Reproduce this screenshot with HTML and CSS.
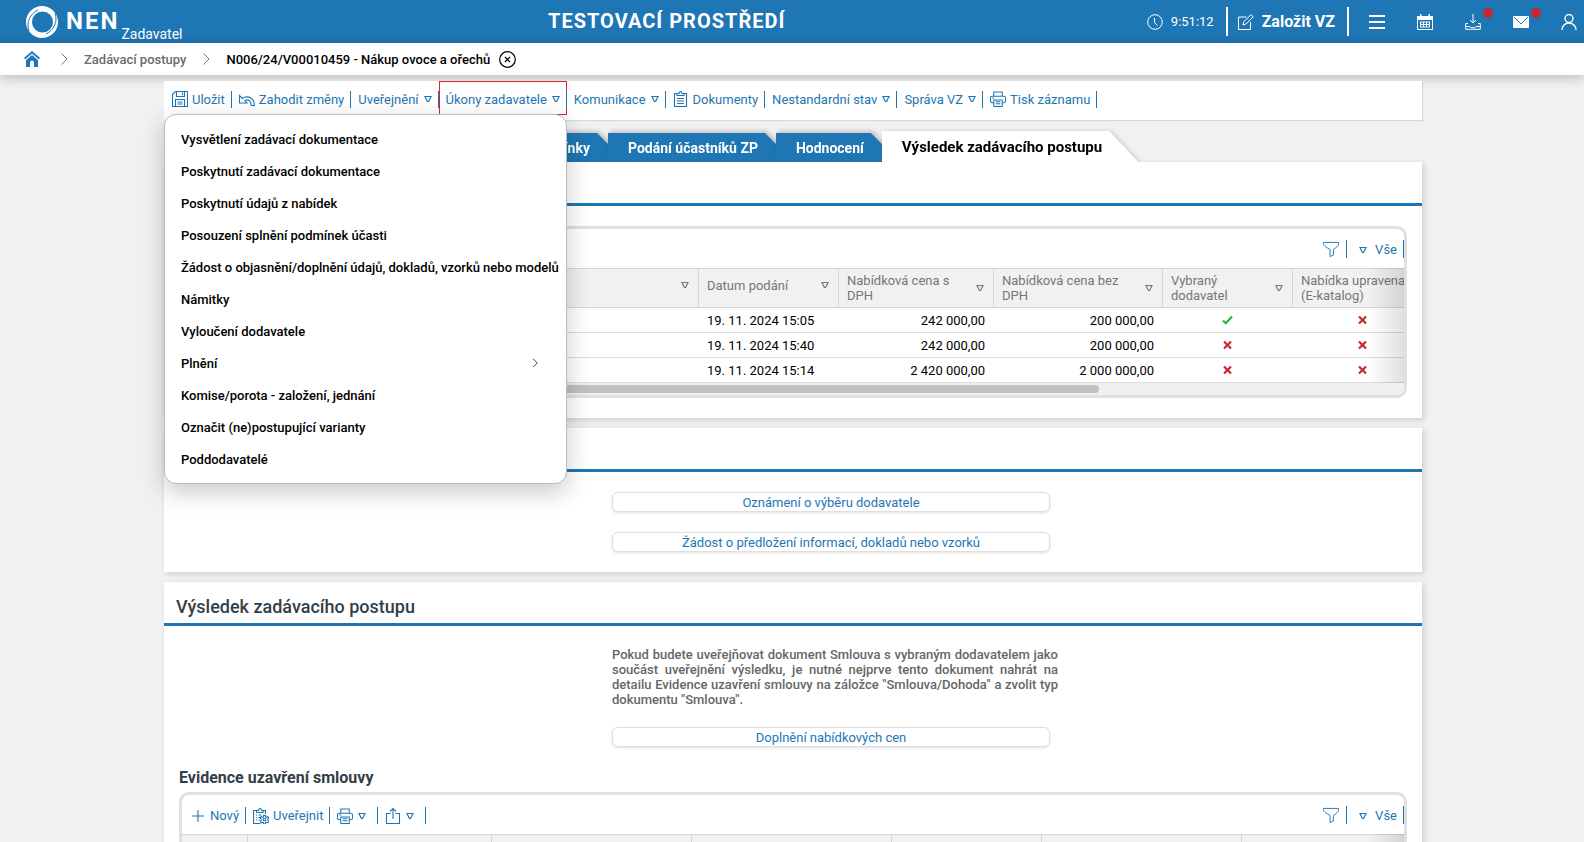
FILE: index.html
```html
<!DOCTYPE html>
<html lang="cs">

<head>
  <meta charset="UTF-8">
  <meta name="viewport" content="width=device-width, initial-scale=1.0">
  <title>NEN - Výsledek zadávacího postupu</title>
  <link rel="stylesheet" href="styles.css">
</head>

<body>
  <!-- shared icons -->
  <svg class="sprite" aria-hidden="true">
    <symbol id="i-tri" viewBox="0 0 8 8"><path d="M1 1.5h6L4.6 6.5H3.4z" /></symbol>
    <symbol id="i-chevron" viewBox="0 0 8 12"><path d="M1.5.5L7 6l-5.500 5.500" /></symbol>
    <symbol id="i-print" viewBox="0 0 17 17">
      <path d="M4 5.500V1h9v4.500M4 12.500H2.500a2 2 0 0 1-2-2v-3a2 2 0 0 1 2-2h12a2 2 0 0 1 2 2v3a2 2 0 0 1-2 2H13M4 9.500h9v7H4zM2.500 7.500h2M6 11.500h5M6 13.500h5" />
    </symbol>
    <symbol id="i-funnel" viewBox="0 0 17 17"><path d="M.5 1.500h16v1.500c0 2-3 4.500-5.500 6v6l-3.500 1.500V9C5 7.500.5 5 .5 3z" /></symbol>
    <symbol id="i-yes" viewBox="0 0 11 10"><path d="M1 5.500l2.800 2.700L10 1.500" /></symbol>
    <symbol id="i-no" viewBox="0 0 11 10"><path d="M2 1.500l7 7M9 1.500l-7 7" /></symbol>
  </svg>

  <header class="topbar">
    <a class="brand" href="#">
      <svg class="logo" viewBox="0 0 32 32">
        <path fill-rule="evenodd" d="M16 0a16 16 0 1 1 0 32a16 16 0 0 1 0-32zM16.500 5.500a10.500 10.500 0 1 0 0 21a10.500 10.500 0 0 0 0-21z" />
        <path class="logo-cut" d="M3 25C0 16 4 8 12 4M29 7c3 9-1 17-9 21" />
      </svg>
      <strong class="brand-name">NEN</strong>
      <span class="brand-role">Zadavatel</span>
    </a>
    <div class="env">TESTOVACÍ PROSTŘEDÍ</div>
    <div class="top-actions">
      <span class="clock">
        <svg class="icon" viewBox="0 0 16 16"><circle cx="8" cy="8" r="7.300" /><path d="M7.500 4v4.500l3 3" /></svg>
        9:51:12
      </span>
      <button class="create">
        <svg class="icon" viewBox="0 0 16 16"><path d="M8.500 3H.5v12.500h12V8M5 11l.7-3.200L13 .7l2.200 2.100L8 10z" /></svg>
        Založit VZ
      </button>
      <button class="top-btn" aria-label="Menu">
        <svg class="icon bold" viewBox="0 0 16 16"><path d="M0 2h16M0 8h16M0 14h16" /></svg>
      </button>
      <button class="top-btn" aria-label="Kalendář">
        <svg class="icon" viewBox="0 0 16 16">
          <path class="solid" d="M0 2h16v4H0zM3 0h1.500v2H3zM11.500 0H13v2h-1.500z" />
          <path d="M.5 5v10.500h15V5M3 8h10M3 10.500h10M3 13h10M3.500 8v5M6.500 8v5M9.500 8v5M12.500 8v5" />
        </svg>
      </button>
      <button class="top-btn" aria-label="Stažené soubory">
        <svg class="icon" viewBox="0 0 16 16"><path d="M8 0v9M5 6l3 3 3-3M3 9.500H.7v5.800h14.600V9.500H13M1 12.500h4l1 1.200h4l1-1.200h4" /></svg>
        <i class="dot"></i>
      </button>
      <button class="top-btn" aria-label="Zprávy">
        <svg class="icon" viewBox="0 0 16 16"><rect class="solid" y="2" width="16" height="12" rx="1" /><path class="flap" d="M1 3l7 7 7-7" /></svg>
        <i class="dot"></i>
      </button>
      <button class="top-btn" aria-label="Uživatel">
        <svg class="icon thick" viewBox="0 0 16 16"><circle cx="8" cy="4.500" r="4" /><path d="M1 16c0-4 3-7 7-7s7 3 7 7" /></svg>
      </button>
    </div>
  </header>

  <nav class="breadcrumb">
    <a class="home-link" href="#" aria-label="Domů">
      <svg class="home" viewBox="0 0 16 16"><path d="M0 7L8 0l8 7-1.300 1.300L8 2.500 1.300 8.300zM2 9.200L8 4l6 5.200V16h-4v-4.500a2 2 0 0 0-4 0V16H2z" /></svg>
    </a>
    <svg class="crumb-sep"><use href="#i-chevron" /></svg>
    <a class="crumb" href="#">Zadávací postupy</a>
    <svg class="crumb-sep"><use href="#i-chevron" /></svg>
    <span class="crumb current">N006/24/V00010459 - Nákup ovoce a ořechů</span>
    <button class="close" aria-label="Zavřít">
      <svg viewBox="0 0 17 17"><circle cx="8.500" cy="8.500" r="7.800" /><path d="M6 6l5 5M11 6l-5 5" /></svg>
    </button>
  </nav>

  <main>
    <div class="toolbar">
      <button class="tool">
        <svg class="icon" viewBox="0 0 16 16"><path d="M.5 3.500l3-3h12v15H.5zM4.500.5v5h8v-5M10.500 1.500v2.500M3.500 15.500v-7h9v7M5.500 11h5M5.500 13h5" /></svg>
        Uložit
      </button>
      <button class="tool">
        <svg class="icon" viewBox="0 0 16 16"><path d="M.5 4.500v7.500H8L6 9.500c3-1.500 6 0 6.300 5h3C15.800 8 9 3.500 3.500 7.500z" /></svg>
        Zahodit změny
      </button>
      <button class="tool">Uveřejnění<svg class="tri"><use href="#i-tri" /></svg></button>
      <button class="tool active" aria-expanded="true">Úkony zadavatele<svg class="tri"><use href="#i-tri" /></svg></button>
      <button class="tool">Komunikace<svg class="tri"><use href="#i-tri" /></svg></button>
      <button class="tool">
        <svg class="icon" viewBox="0 0 16 16"><path d="M4 2.500H1.500v13h12v-13H11M4 4.500V2.500h2c0-2.500 3-2.500 3 0h2v2zM4 7.500h7M4 10h7M4 12.500h7" /></svg>
        Dokumenty
      </button>
      <button class="tool">Nestandardní stav<svg class="tri"><use href="#i-tri" /></svg></button>
      <button class="tool">Správa VZ<svg class="tri"><use href="#i-tri" /></svg></button>
      <button class="tool"><svg class="icon"><use href="#i-print" /></svg>Tisk záznamu</button>

      <ul class="menu">
        <li><a href="#">Vysvětlení zadávací dokumentace</a></li>
        <li><a href="#">Poskytnutí zadávací dokumentace</a></li>
        <li><a href="#">Poskytnutí údajů z nabídek</a></li>
        <li><a href="#">Posouzení splnění podmínek účasti</a></li>
        <li><a href="#">Žádost o objasnění/doplnění údajů, dokladů, vzorků nebo modelů</a></li>
        <li><a href="#">Námitky</a></li>
        <li><a href="#">Vyloučení dodavatele</a></li>
        <li><a href="#">Plnění <svg class="more"><use href="#i-chevron" /></svg></a></li>
        <li><a href="#">Komise/porota - založení, jednání</a></li>
        <li><a href="#">Označit (ne)postupující varianty</a></li>
        <li><a href="#">Poddodavatelé</a></li>
      </ul>
    </div>

    <ul class="tabs">
      <li class="tab first"><a href="#">Podmínky</a></li>
      <li class="tab"><a href="#">Podání účastníků ZP</a></li>
      <li class="tab"><a href="#">Hodnocení</a></li>
      <li class="tab selected"><a href="#">Výsledek zadávacího postupu</a></li>
    </ul>

    <section class="panel">
      <div class="panel-head"></div>
      <div class="grid">
        <div class="grid-bar">
          <div class="grid-filter">
            <button class="filter" aria-label="Filtr"><svg class="icon"><use href="#i-funnel" /></svg></button>
            <button class="view"><svg class="tri"><use href="#i-tri" /></svg>Vše</button>
          </div>
        </div>
        <div class="grid-view">
          <table class="offers">
            <colgroup>
              <col class="w-name"><col class="w-date"><col class="w-price"><col class="w-price-net"><col class="w-flag"><col class="w-catalog"><col class="w-rest">
            </colgroup>
            <thead>
              <tr>
                <th class="one-line"><div><span></span><svg class="tri"><use href="#i-tri" /></svg></div></th>
                <th class="one-line"><div><span>Datum podání</span><svg class="tri"><use href="#i-tri" /></svg></div></th>
                <th><div><span>Nabídková cena s DPH</span><svg class="tri"><use href="#i-tri" /></svg></div></th>
                <th><div><span>Nabídková cena bez DPH</span><svg class="tri"><use href="#i-tri" /></svg></div></th>
                <th><div><span>Vybraný dodavatel</span><svg class="tri"><use href="#i-tri" /></svg></div></th>
                <th><div><span>Nabídka upravena (E-katalog)</span></div></th>
                <th></th>
              </tr>
            </thead>
            <tbody>
              <tr>
                <td></td>
                <td>19. 11. 2024 15:05</td>
                <td class="num">242 000,00</td>
                <td class="num">200 000,00</td>
                <td class="flag"><svg class="yes"><use href="#i-yes" /></svg></td>
                <td class="flag"><svg class="no"><use href="#i-no" /></svg></td>
                <td></td>
              </tr>
              <tr>
                <td></td>
                <td>19. 11. 2024 15:40</td>
                <td class="num">242 000,00</td>
                <td class="num">200 000,00</td>
                <td class="flag"><svg class="no"><use href="#i-no" /></svg></td>
                <td class="flag"><svg class="no"><use href="#i-no" /></svg></td>
                <td></td>
              </tr>
              <tr>
                <td></td>
                <td>19. 11. 2024 15:14</td>
                <td class="num">2 420 000,00</td>
                <td class="num">2 000 000,00</td>
                <td class="flag"><svg class="no"><use href="#i-no" /></svg></td>
                <td class="flag"><svg class="no"><use href="#i-no" /></svg></td>
                <td></td>
              </tr>
            </tbody>
          </table>
        </div>
        <div class="scroll"><div class="thumb"></div></div>
      </div>
    </section>

    <section class="panel">
      <div class="panel-head"></div>
      <div class="form">
        <button class="wide-btn">Oznámení o výběru dodavatele</button>
        <button class="wide-btn">Žádost o předložení informací, dokladů nebo vzorků</button>
      </div>
    </section>

    <section class="panel">
      <h2 class="panel-head">Výsledek zadávacího postupu</h2>
      <div class="form">
        <p class="note">Pokud budete uveřejňovat dokument Smlouva s vybraným dodavatelem jako součást uveřejnění výsledku, je nutné nejprve tento dokument nahrát na detailu Evidence uzavření smlouvy na záložce "Smlouva/Dohoda" a zvolit typ dokumentu "Smlouva".</p>
        <button class="wide-btn">Doplnění nabídkových cen</button>
      </div>
      <h3 class="grid-title">Evidence uzavření smlouvy</h3>
      <div class="grid">
        <div class="grid-bar">
          <button class="tool">
            <svg class="icon" viewBox="0 0 16 16"><path d="M8 2v12M2 8h12" /></svg>
            Nový
          </button>
          <button class="tool">
            <svg class="icon" viewBox="0 0 16 16"><path d="M3.500 2.500h-3v13h7M10 2.500h2.500V6M3.500 4.500v-2h2c0-2.500 3-2.500 3 0H10v2zM3 7h1M3 9.500h1M3 12h1M5.500 7h3M5.500 9.500h2M5.500 12h1" /><circle cx="11.500" cy="11.500" r="1.300" /><path d="M10.500 7.500h2v1.300l1.300.6 1-.9 1 1.600-1 1v1l1 1-1 1.600-1-.6-1.300.6v1.300h-2v-1.300l-1.200-.6-1.200.6-.9-1.600 1-1v-1l-1-1 .9-1.600 1.200.9 1.200-.6z" /></svg>
            Uveřejnit
          </button>
          <button class="tool spaced" aria-label="Tisk"><svg class="icon"><use href="#i-print" /></svg><svg class="tri"><use href="#i-tri" /></svg></button>
          <button class="tool spaced" aria-label="Export">
            <svg class="icon" viewBox="0 0 16 16"><path d="M5.500 5.500h-4v10h13v-10h-4M8 11V.700M5 3.500l3-3 3 3" /></svg>
            <svg class="tri"><use href="#i-tri" /></svg>
          </button>
          <div class="grid-filter">
            <button class="filter" aria-label="Filtr"><svg class="icon"><use href="#i-funnel" /></svg></button>
            <button class="view"><svg class="tri"><use href="#i-tri" /></svg>Vše</button>
          </div>
        </div>
        <div class="grid-view">
          <table class="contracts">
            <colgroup>
              <col class="w-mark"><col class="w-wide"><col class="w-mid"><col class="w-mid"><col class="w-small"><col class="w-mid"><col class="w-wide">
            </colgroup>
            <thead>
              <tr><th></th><th></th><th></th><th></th><th></th><th></th><th></th></tr>
            </thead>
          </table>
        </div>
      </div>
    </section>
  </main>
</body>

</html>
```
FILE: styles.css
```css
* {
  box-sizing: border-box;
}

body {
  display: flex;
  flex-direction: column;
  height: 100vh;
  margin: 0;
  overflow: hidden;
  background: #f1f1f1;
  color: #000;
  font-family: Roboto, "Liberation Sans", sans-serif;
  font-size: 13px;
  line-height: 15px;
}

button {
  padding: 0;
  border: 0;
  background: none;
  color: inherit;
  font: inherit;
  cursor: pointer;
}

a {
  color: inherit;
  text-decoration: none;
}

ul {
  margin: 0;
  padding: 0;
  list-style: none;
}

svg {
  flex: none;
  fill: none;
  stroke: currentColor;
}

.sprite {
  position: absolute;
  width: 0;
  height: 0;
}

.icon {
  width: 16px;
  height: 16px;
}

.tri {
  width: 8px;
  height: 8px;
  stroke-width: 1.2;
}

/* Top bar */
.topbar {
  display: flex;
  flex: none;
  align-items: center;
  justify-content: space-between;
  height: 43px;
  padding: 0 7px 0 26px;
  background: #1e76b4;
  color: #fff;
}

.brand {
  display: flex;
  align-items: center;
}

.logo {
  width: 32px;
  height: 32px;
  fill: #fff;
  stroke: none;
}

.logo .logo-cut {
  fill: none;
  stroke: #1e76b4;
  stroke-width: 1;
}

.brand-name {
  margin-left: 8px;
  font-size: 24px;
  letter-spacing: 2px;
}

.brand-role {
  align-self: flex-end;
  padding: 26px 0 0 2px;
  font-size: 14px;
}

.env {
  padding-left: 4px;
  font-size: 20px;
  font-weight: 700;
  letter-spacing: 1px;
}

.top-actions {
  display: flex;
  align-items: center;
  gap: 32px;
}

.clock,
.create {
  display: flex;
  align-items: center;
  gap: 8px;
}

.create {
  height: 29px;
  margin: 0 -12px 0 -20px;
  padding: 0 12px 0 10px;
  border: solid #fff;
  border-width: 0 2px;
  font-size: 16px;
  font-weight: 700;
}

.top-btn {
  position: relative;
  display: flex;
}

.icon.bold {
  stroke-width: 2;
}

.icon.thick {
  stroke-width: 1.4;
}

.solid {
  fill: #fff;
  stroke: none;
}

.flap {
  stroke: #1e76b4;
}

.dot {
  position: absolute;
  top: -6px;
  right: -12px;
  width: 10px;
  height: 10px;
  border-radius: 50%;
  background: #c9282d;
}

/* Breadcrumb */
.breadcrumb {
  position: relative;
  z-index: 1;
  display: flex;
  flex: none;
  align-items: center;
  height: 32px;
  padding-left: 24px;
  background: #fff;
  box-shadow: 0 2px 12px rgba(0, 0, 0, .25);
  font-weight: 500;
}

.home-link,
.close {
  display: flex;
}

.home-link {
  margin-right: 4px;
}

.home {
  width: 16px;
  height: 16px;
  fill: #1e76b4;
  stroke: none;
}

.crumb-sep {
  width: 8px;
  height: 12px;
  margin: 0 16px;
  color: #777;
}

.crumb {
  color: #6b6b6b;
}

.crumb.current {
  color: #000;
}

.close {
  margin-left: 9px;
}

.close svg {
  width: 17px;
  height: 17px;
  stroke-width: 1.2;
}

/* Page column */
main {
  flex: 1;
  min-height: 0;
  padding: 6px 162px 0 164px;
  overflow: hidden;
}

.toolbar {
  position: relative;
  z-index: 1;
  display: flex;
  align-items: flex-start;
  height: 39px;
  padding-left: 1px;
  background: #fff;
  box-shadow: 1px 1px 1px rgba(0, 0, 0, .1);
}

.tool {
  display: flex;
  align-items: center;
  gap: 4px;
  position: relative;
  height: 34px;
  padding: 2px 7px 0;
  color: #1e76b4;
  white-space: nowrap;
}

.tool::after {
  content: "";
  position: absolute;
  right: 0;
  width: 1px;
  height: 17px;
  background: #1e76b4;
}

.tool .icon {
  stroke-width: 1.1;
}

.tool .tri {
  margin-left: 1px;
}

.toolbar .active {
  outline: 1px solid #ec1c24;
  outline-offset: -1px;
}

.menu {
  position: absolute;
  top: 33px;
  left: 0;
  width: 403px;
  padding: 8px 16px;
  border: 1px solid #bcbcbc;
  border-radius: 12px;
  background: #fff;
  box-shadow: 0 8px 24px rgba(0, 0, 0, .22);
  font-weight: 500;
  white-space: nowrap;
}

.menu a {
  display: flex;
  align-items: center;
  justify-content: space-between;
  height: 32px;
}

.more {
  width: 6px;
  height: 10px;
  margin-right: 12px;
}

/* Tabs */
.tabs {
  display: flex;
  align-items: flex-end;
  height: 42px;
  padding-top: 11px;
  overflow: hidden;
}

.tab {
  margin-right: -18px;
  filter: drop-shadow(2px -2px 2px rgba(0, 0, 0, .2));
}

.tab a {
  display: flex;
  align-items: center;
  height: 29px;
  padding: 2px 36px 0 20px;
  background: #1e76b4;
  clip-path: polygon(0 0, calc(100% - 29px) 0, 100% 100%, 0 100%);
  color: #fff;
  font-size: 14px;
  font-weight: 700;
}

.tab.first {
  width: 462px;
}

.tab.first a {
  justify-content: flex-end;
}

.tab.selected {
  filter: drop-shadow(2px 0 2px rgba(0, 0, 0, .15));
}

.tab.selected a {
  height: 31px;
  background: #fff;
  color: #000;
  font-size: 15px;
}

/* Panels */
.panel {
  margin-bottom: 10px;
  background: #fff;
  box-shadow: 2px 2px 6px rgba(0, 0, 0, .15);
}

.panel-head {
  height: 44px;
  margin: 0;
  padding: 15px 12px 0;
  border-bottom: 3px solid #1e76b4;
  color: #333e48;
  font-size: 18px;
  font-weight: 500;
  line-height: 20px;
}

.form {
  display: flex;
  flex-direction: column;
  gap: 20px;
  width: 438px;
  margin-left: 448px;
  padding: 20px 0;
}

.wide-btn {
  height: 20px;
  border: 1px solid #dfdfdf;
  border-radius: 6px;
  background: #fff;
  box-shadow: 0 1px 3px rgba(0, 0, 0, .12);
  color: #1e76b4;
}

.note {
  margin: 0 -8px 0 0;
  padding-top: 1px;
  color: #666;
  font-weight: 500;
  text-align: justify;
}

.grid-title {
  margin: 0;
  padding: 0 15px;
  color: #333e48;
  font-size: 16px;
  font-weight: 700;
  line-height: 21px;
}

/* Data grids */
.grid {
  margin: 0 15px;
  border: 3px solid #dfe0e1;
  border-radius: 10px;
  overflow: hidden;
}

.panel-head + .grid {
  margin-top: 20px;
}

.grid-title + .grid {
  margin-top: 4px;
}

.panel:has(.scroll) {
  padding-bottom: 20px;
}

.grid-bar {
  display: flex;
  align-items: center;
  height: 39px;
  padding-left: 1px;
}

.grid-bar .spaced {
  padding-right: 12px;
}

.grid-filter {
  display: flex;
  align-items: center;
  margin-left: auto;
  color: #1e76b4;
}

.filter,
.view {
  display: flex;
  align-items: center;
  height: 18px;
  border-right: 1px solid #1e76b4;
}

.filter {
  padding-right: 7px;
}

.view {
  gap: 8px;
  padding: 2px 6px 0 12px;
}

.grid-view {
  position: relative;
  overflow: hidden;
}

/* fade that hints at more columns to the right */
.grid-view::after {
  content: "";
  position: absolute;
  top: 0;
  right: 0;
  bottom: 0;
  width: 36px;
  background: linear-gradient(to right, transparent, rgba(0, 0, 0, .12));
}

table {
  width: 1651px;
  border-collapse: separate;
  border-spacing: 0;
  table-layout: fixed;
}

th {
  height: 40px;
  padding: 0 9px 0 8px;
  border: solid #d6d6d6;
  border-width: 1px 1px 1px 0;
  background: #f1f1f1;
  color: #777;
  font-weight: 400;
  text-align: left;
}

th.one-line {
  padding-bottom: 6px;
}

th div {
  display: flex;
  align-items: center;
  justify-content: space-between;
  gap: 24px;
}

td {
  height: 25px;
  padding: 0 9px 0 8px;
  border-bottom: 1px solid #dcdcdc;
}

.num {
  text-align: right;
}

.flag {
  text-align: center;
}

.flag svg {
  width: 11px;
  height: 10px;
  vertical-align: baseline;
  stroke-width: 2.2;
}

.yes {
  color: #2fb344;
}

.no {
  color: #c9282d;
}

.w-name {
  width: 517px;
}

.w-date {
  width: 140px;
}

.w-price {
  width: 155px;
}

.w-price-net {
  width: 169px;
}

.w-flag {
  width: 130px;
}

.w-catalog {
  width: 140px;
}

.w-mark {
  width: 66px;
}

.w-wide {
  width: 244px;
}

.w-mid {
  width: 200px;
}

.w-small {
  width: 150px;
}

.contracts {
  width: 1304px;
}

.scroll {
  height: 12px;
  padding: 2px 0;
  background: #efefef;
}

.thumb {
  width: 75%;
  height: 8px;
  border-radius: 4px;
  background: #c1c1c1;
}
```
